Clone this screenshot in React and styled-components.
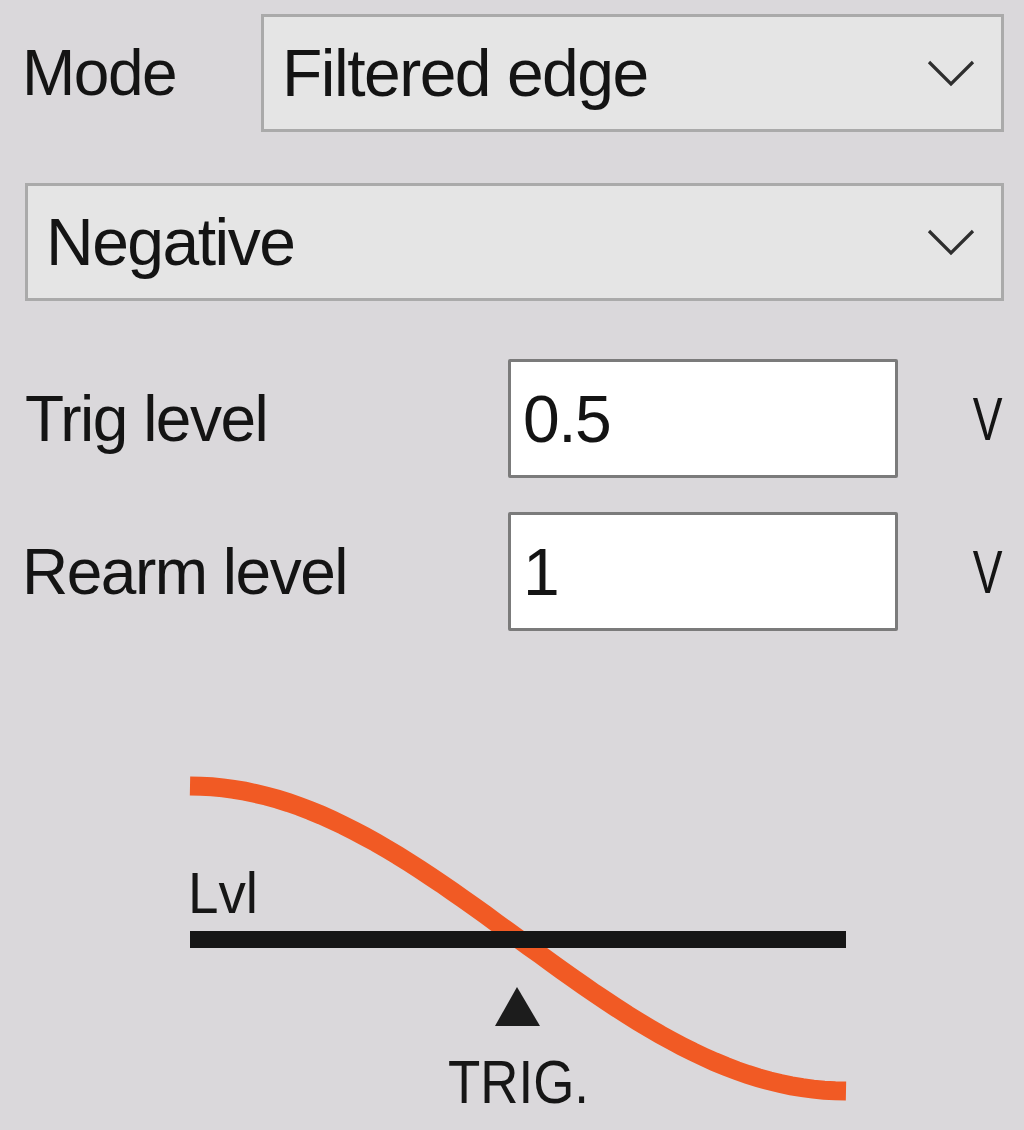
import styled, {createGlobalStyle} from "styled-components";

const GlobalStyle = createGlobalStyle`
  html, body {
    margin: 0;
    padding: 0;
    background: #dad8db;
  }
  body {
    font-family: "Liberation Sans", Arial, sans-serif;
    color: #141414;
  }
`;

const Panel = styled.div`
  width: 1024px;
  height: 1130px;
  box-sizing: border-box;
  padding: 14px 20px 0 22px;
  display: flex;
  flex-direction: column;
  overflow: hidden;
`;

const ModeRow = styled.div`
  display: grid;
  grid-template-columns: 239px 1fr;
  align-items: center;
  height: 118px;
`;

const FieldRow = styled.div`
  display: grid;
  grid-template-columns: 486px 390px 1fr;
  align-items: center;
  height: 119px;
  margin-top: ${(p) => p.$gap}px;
`;

const Label = styled.div`
  font-size: 64px;
  letter-spacing: -1.5px;
  line-height: 1;
  padding-left: ${(p) => p.$indent || 0}px;
  white-space: nowrap;
`;

const Combo = styled.div`
  height: 118px;
  box-sizing: border-box;
  border: 3px solid #aaaaaa;
  background: #e5e5e5;
  display: flex;
  align-items: center;
  justify-content: space-between;
  padding: 0 26px 0 18px;
  margin-left: ${(p) => p.$indent || 0}px;
  margin-top: ${(p) => p.$gap || 0}px;
  font-size: 66px;
  letter-spacing: -1.5px;
  line-height: 1;
`;

const TextBox = styled.div`
  height: 119px;
  box-sizing: border-box;
  border: 3px solid #7b7b7b;
  border-radius: 2px;
  background: #ffffff;
  display: flex;
  align-items: center;
  padding-left: 12px;
  font-size: 66px;
  letter-spacing: -1.5px;
  line-height: 1;
`;

const Unit = styled.div`
  font-size: 62px;
  line-height: 1;
  text-align: right;
  padding-right: 2px;
  transform: scaleX(0.72);
  transform-origin: right center;
`;

const Chart = styled.div`
  margin-top: 127px;
  padding-left: 128px;
  display: flex;
`;

const Chevron = () => (
  <svg width="48" height="28" viewBox="0 0 48 28">
    <path d="M2 3 L24 25 L46 3" fill="none" stroke="#2e2e2e" strokeWidth="3.2" />
  </svg>
);

const curve = () => {
  const pts = [];
  for (let i = 0; i <= 60; i++) {
    const x = 190 + (656 * i) / 60;
    const y = 940.5 - 152.5 * Math.cos((Math.PI * i) / 60);
    pts.push(`${x.toFixed(1)},${y.toFixed(1)}`);
  }
  return pts.join(" ");
};

const TriggerDiagram = () => (
  <svg width="720" height="370" viewBox="150 760 720 370">
    <polyline points={curve()} fill="none" stroke="#f15a24" strokeWidth="19" />
    <rect x="190" y="933" width="656" height="17" fill="#161616" />
    <polygon points="517,989 495,1028 540,1028" fill="#1c1c1c" />
    <text x="188" y="915" fontSize="58" fill="#161616"
          fontFamily="Liberation Sans, Arial, sans-serif"
          textLength="70" lengthAdjust="spacingAndGlyphs">Lvl</text>
    <text x="448" y="1105" fontSize="62" fill="#161616"
          fontFamily="Liberation Sans, Arial, sans-serif"
          textLength="141" lengthAdjust="spacingAndGlyphs">TRIG.</text>
  </svg>
);

const App = () => {
  return (
    <Panel>
      <GlobalStyle/>
      <ModeRow>
        <Label>Mode</Label>
        <Combo>
          <span>Filtered edge</span>
          <Chevron/>
        </Combo>
      </ModeRow>
      <Combo $indent={3} $gap={51}>
        <span>Negative</span>
        <Chevron/>
      </Combo>
      <FieldRow $gap={58}>
        <Label $indent={3}>Trig level</Label>
        <TextBox>0.5</TextBox>
        <Unit>V</Unit>
      </FieldRow>
      <FieldRow $gap={34}>
        <Label>Rearm level</Label>
        <TextBox>1</TextBox>
        <Unit>V</Unit>
      </FieldRow>
      <Chart>
        <TriggerDiagram/>
      </Chart>
    </Panel>
  )
}
export default App
